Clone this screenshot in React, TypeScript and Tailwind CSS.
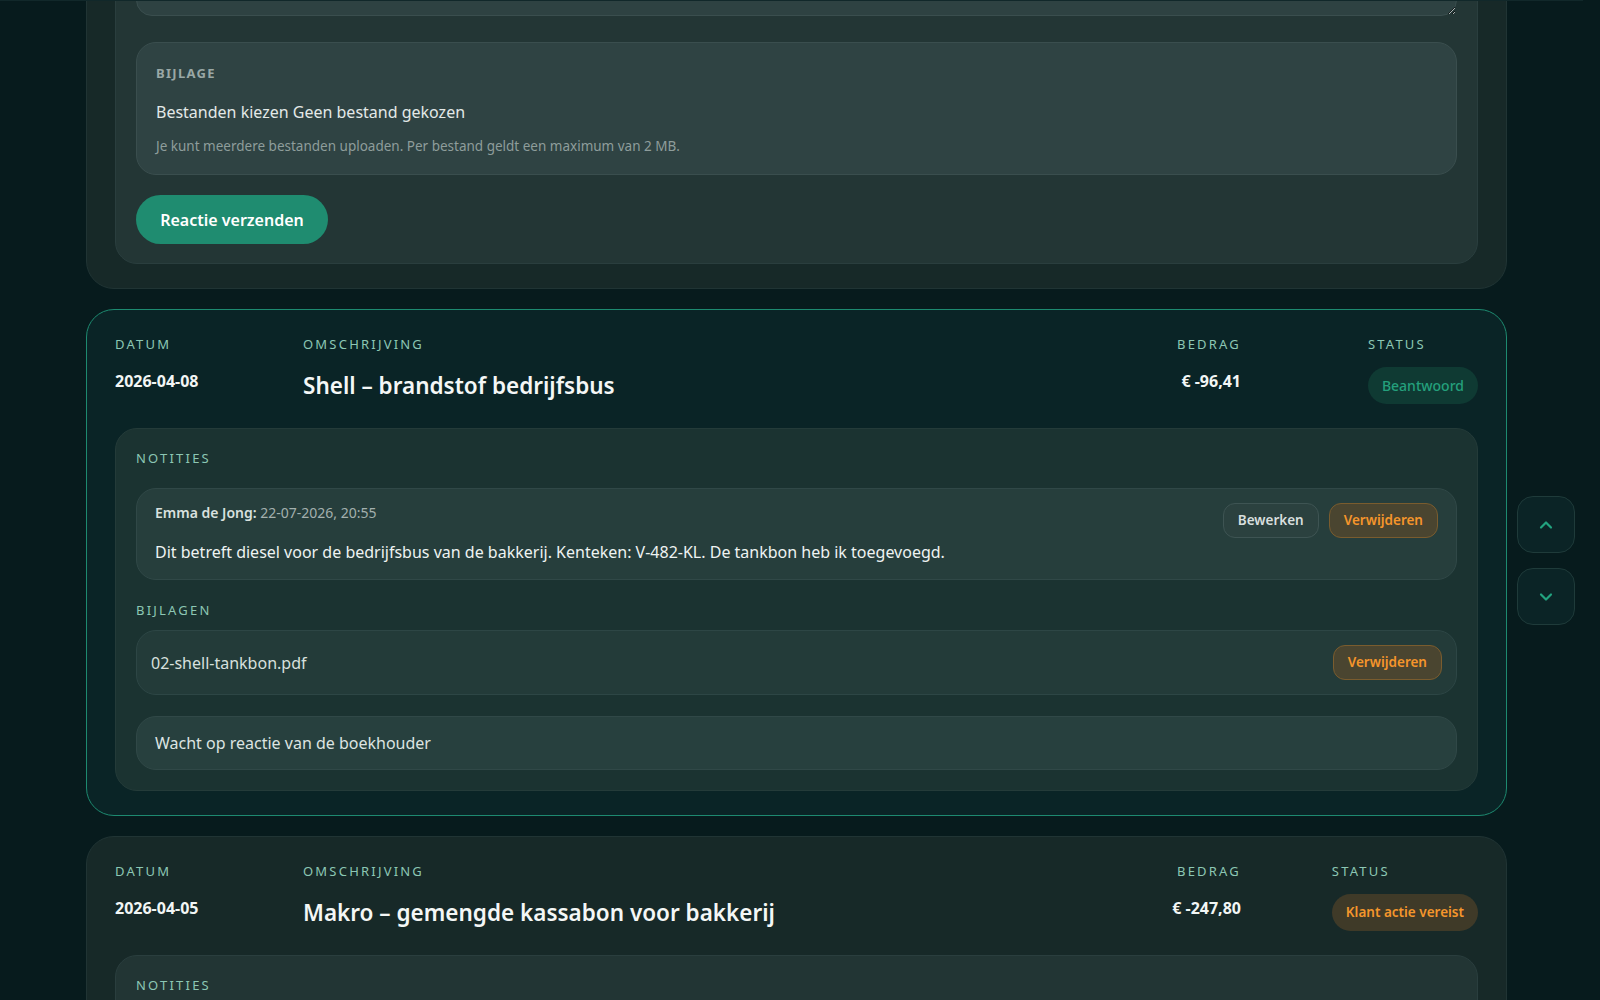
import React from "react";

const label = "text-[13px] leading-4 uppercase tracking-[0.17em] text-[#8cc7b4]";

function Header({ date, title, amount, status, tone }: { date: string; title: string; amount: string; status: string; tone: "green" | "orange" }) {
  return (
    <div className="grid grid-cols-[188px_1fr_160px_237px]">
      <div className="flex flex-col gap-[14px]">
        <div className={label}>Datum</div>
        <div className="pt-px text-[16px] leading-7 font-bold text-[#f2f6f5]">{date}</div>
      </div>
      <div className="flex flex-col gap-[14px]">
        <div className={label}>Omschrijving</div>
        <div className="pt-[2px] text-[22.5px] leading-[36px] font-semibold text-[#f4f7f6]">{title}</div>
      </div>
      <div className="flex flex-col items-end gap-[14px]">
        <div className={label}>Bedrag</div>
        <div className="pt-px text-[16px] leading-7 font-bold text-[#f2f6f5]">{amount}</div>
      </div>
      <div className="flex flex-col items-start gap-[14px] justify-self-end">
        <div className={label}>Status</div>
        {tone === "green" ? (
          <div className="mt-px h-[37px] px-[14px] rounded-full bg-[#0f3a33] text-[#24a07c] text-[14px] font-medium flex items-center">{status}</div>
        ) : (
          <div className="mt-px h-[37px] px-[14px] rounded-full bg-[#3f3a28] text-[#f4962c] text-[13.5px] font-semibold flex items-center">{status}</div>
        )}
      </div>
    </div>
  );
}

function Chevron({ up }: { up?: boolean }) {
  return (
    <svg width="16" height="16" viewBox="0 0 16 16" fill="none" stroke="#22a37f" strokeWidth="2.2" strokeLinecap="round" strokeLinejoin="round">
      {up ? <path d="M3 10.5 L8 5.5 L13 10.5" /> : <path d="M3 5.5 L8 10.5 L13 5.5" />}
    </svg>
  );
}

export default function App() {
  return (
    <div className="min-h-screen bg-[#071b1d] font-['Noto_Sans','Open_Sans',sans-serif] overflow-hidden relative">
      <div className="fixed top-0 left-0 h-px w-[1583px] bg-[#11282a] z-10" />
      <div className="pl-[86px] -mt-[182px] pb-10">
        <div className="w-[1421px] flex flex-col gap-5">
          {/* Reply card (scrolled) */}
          <div className="rounded-[28px] border border-[#203434] bg-[#172928] px-[28px] pt-[26px] pb-6">
            <div className="rounded-[22px] border border-[#2a3e3e] bg-[#233635] px-5 pt-5 pb-[19px]">
              <textarea className="block w-full h-[150px] rounded-2xl border border-[#3a4e4e] bg-[#2e4242] text-[#dfe6e5] p-4 outline-none" defaultValue="" />
              <div className="mt-[26px] rounded-[20px] border border-[#3a4e4e] bg-[#2f4343] px-[19px] pt-[22px] pb-[18px]">
                <div className="text-[13px] leading-4 uppercase tracking-[0.1em] font-bold text-[#9aa8a6]">Bijlage</div>
                <div className="mt-[19px] text-[16px] leading-6 text-[#e3e9e8]">Bestanden kiezen Geen bestand gekozen</div>
                <div className="mt-[12px] text-[13.5px] leading-5 text-[#8e9d9b]">Je kunt meerdere bestanden uploaden. Per bestand geldt een maximum van 2 MB.</div>
              </div>
              <button className="mt-5 h-[49px] w-[192px] rounded-full bg-[#1f8c70] text-white text-[16px] font-semibold">Reactie verzenden</button>
            </div>
          </div>

          {/* Active card */}
          <div className="rounded-[28px] border border-[#1d8a70] bg-[#0a2426] px-[28px] pt-[26px] pb-6">
            <Header date="2026-04-08" title="Shell – brandstof bedrijfsbus" amount="€ -96,41" status="Beantwoord" tone="green" />
            <div className="mt-6 rounded-[22px] border border-[#243b39] bg-[#1b3331] px-5 pt-[21px] pb-5">
              <div className={label}>Notities</div>
              <div className="mt-[22px] rounded-[20px] border border-[#304847] bg-[#263e3c] px-[18px] pt-[14px] pb-[15px]">
                <div className="flex items-start justify-between">
                  <div className="text-[14px] leading-5 text-[#a3b0ae]">
                    <span className="font-semibold text-[#d9e1df]">Emma de Jong:</span> 22-07-2026, 20:55
                  </div>
                  <div className="flex gap-[10px]">
                    <button className="h-[35px] px-[14px] rounded-xl border border-[#3e5453] bg-[#2b413f] text-[#d8dfde] text-[13.5px] font-semibold">Bewerken</button>
                    <button className="h-[35px] px-[14px] rounded-xl border border-[#7a5c2e] bg-[#4a4530] text-[#f5952b] text-[13.5px] font-semibold">Verwijderen</button>
                  </div>
                </div>
                <div className="mt-0.5 text-[16px] leading-6 text-[#eef3f2]">Dit betreft diesel voor de bedrijfsbus van de bakkerij. Kenteken: V-482-KL. De tankbon heb ik toegevoegd.</div>
              </div>
              <div className={label + " mt-[22px]"}>Bijlagen</div>
              <div className="mt-[12px] rounded-[20px] border border-[#2d4645] bg-[#233b39] px-[14px] py-[14px] flex items-center justify-between">
                <div className="text-[16px] leading-6 text-[#d8e0de]">02-shell-tankbon.pdf</div>
                <button className="h-[35px] px-[14px] rounded-xl border border-[#7a5c2e] bg-[#4a4530] text-[#f5952b] text-[13.5px] font-semibold">Verwijderen</button>
              </div>
              <div className="mt-[21px] rounded-[20px] border border-[#304847] bg-[#27403e] px-[18px] py-[14px] text-[16px] leading-6 text-[#dde4e2]">Wacht op reactie van de boekhouder</div>
            </div>
          </div>

          {/* Next card */}
          <div className="rounded-[28px] border border-[#203434] bg-[#172928] px-[28px] pt-[26px] pb-6">
            <Header date="2026-04-05" title="Makro – gemengde kassabon voor bakkerij" amount="€ -247,80" status="Klant actie vereist" tone="orange" />
            <div className="mt-6 rounded-[22px] border border-[#2a3e3e] bg-[#223534] px-5 pt-[21px] pb-5 h-[200px]">
              <div className={label}>Notities</div>
            </div>
          </div>
        </div>
      </div>

      <div className="fixed left-[1517px] top-[496px] flex flex-col gap-[15px]">
        <button className="w-[58px] h-[57px] rounded-2xl border border-[#1f3b3a] bg-[#0b2426] flex items-center justify-center"><Chevron up /></button>
        <button className="w-[58px] h-[57px] rounded-2xl border border-[#1f3b3a] bg-[#0b2426] flex items-center justify-center"><Chevron /></button>
      </div>
    </div>
  );
}
